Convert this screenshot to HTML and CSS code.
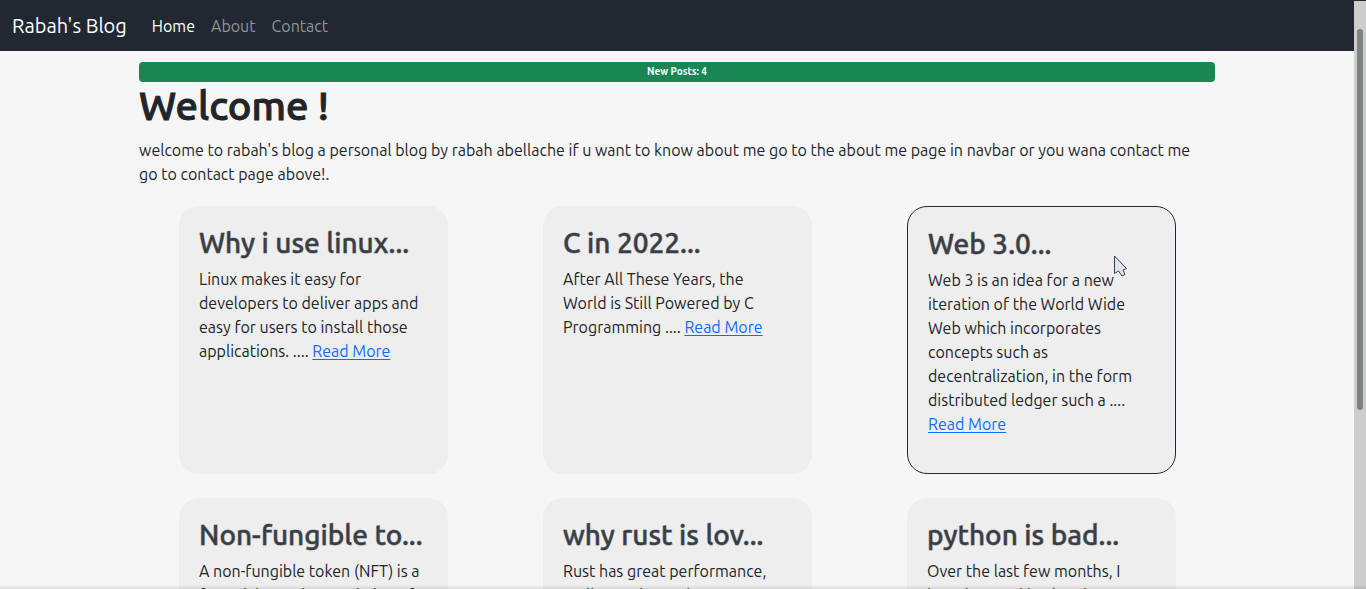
FILE: index.html
```html
<!DOCTYPE html>
<html lang="en">
<head>
<meta charset="utf-8">
<title>Rabah's Blog</title>
<link rel="stylesheet" href="styles.css">
</head>
<body>
<div class="page">
  <header class="navbar">
    <a class="brand" href="#">Rabah's Blog</a>
    <nav class="links">
      <a class="link active" href="#">Home</a>
      <a class="link" href="#">About</a>
      <a class="link" href="#">Contact</a>
    </nav>
  </header>
  <main class="container">
    <div class="badge">New Posts: 4</div>
    <h1 class="heading">Welcome !</h1>
    <p class="intro">welcome to rabah's blog a personal blog by rabah abellache if u want to know about me go to the about me page in navbar or you wana contact me go to contact page above!.</p>
    <section class="posts">
      <article class="post">
        <h2 class="title">Why i use linux...</h2>
        <p class="text">Linux makes it easy for<br>developers to deliver apps and<br>easy for users to install those<br>applications. .... <a class="more" href="#">Read More</a></p>
      </article>
      <article class="post">
        <h2 class="title">C in 2022...</h2>
        <p class="text">After All These Years, the<br>World is Still Powered by C<br>Programming .... <a class="more" href="#">Read More</a></p>
      </article>
      <article class="post selected">
        <h2 class="title">Web 3.0...</h2>
        <p class="text">Web 3 is an idea for a new<br>iteration of the World Wide<br>Web which incorporates<br>concepts such as<br>decentralization, in the form<br>distributed ledger such a ....<br><a class="more" href="#">Read More</a></p>
        <svg class="pointer" viewBox="0 0 14 22" aria-hidden="true"><path d="M1.500 1v17.500l4-2.500 3.500 5 3-1.500-2-4.500 3.500-1.500z"/></svg>
      </article>
      <article class="post">
        <h2 class="title">Non-fungible to...</h2>
        <p class="text">A non-fungible token (NFT) is a<br>financial security consisting of</p>
      </article>
      <article class="post">
        <h2 class="title">why rust is lov...</h2>
        <p class="text">Rust has great performance,<br>really good speed,</p>
      </article>
      <article class="post">
        <h2 class="title">python is bad...</h2>
        <p class="text">Over the last few months, I<br>heard several backend</p>
      </article>
    </section>
  </main>
</div>
<div class="scrollbar"><div class="thumb"></div></div>
</body>
</html>
```
FILE: styles.css
```css
* { box-sizing: border-box; }
body {
  margin: 0;
  height: 100vh;
  overflow: hidden;
  display: grid;
  grid-template-columns: 1fr 12px;
  border-top: 1px solid #2c2627;
  background: #f6f6f6;
  color: #212529;
  font: 16px/24px Ubuntu, "Noto Sans", sans-serif;
}
body::after {
  content: "";
  position: fixed;
  inset: auto 0 0;
  height: 4px;
  background: linear-gradient(transparent, rgba(0, 0, 0, 0.1));
}
.page { overflow: hidden; }
.navbar {
  display: flex;
  align-items: center;
  gap: 25px;
  height: 50px;
  padding: 0 12px;
  background: #222831;
}
.brand { color: #fff; font-size: 20px; text-decoration: none; }
.links { display: flex; gap: 16px; }
.link { color: #919498; text-decoration: none; }
.link.active { color: #fff; }
.container { max-width: 1100px; margin: 0 auto; padding: 11px 12px 0; }
.badge {
  height: 20px;
  border-radius: 4px;
  background: #198754;
  color: #fff;
  font-size: 10px;
  line-height: 20px;
  font-weight: 700;
  text-align: center;
}
.heading { margin: 0 0 8px; font-size: 40px; line-height: 48px; font-weight: 500; -webkit-text-stroke: 1px; }
.intro { margin: 0 0 20px; padding-right: 8px; }
.posts {
  display: grid;
  grid-template-columns: repeat(3, 269px);
  justify-content: space-between;
  gap: 24px 0;
  padding: 0 39px 0 40px;
}
.post {
  position: relative;
  min-height: 268px;
  padding: 20px;
  border-radius: 20px;
  background: #eee;
}
.selected { border: 1px solid #222831; }
.title {
  margin: 0 0 7px;
  color: #393e46;
  font-size: 28px;
  line-height: 34px;
  font-weight: 500;
  white-space: nowrap;
  -webkit-text-stroke: 1px rgba(57, 62, 70, 0.5);
}
.text { margin: 0; white-space: nowrap; }
.more { color: #0d6efd; text-underline-offset: 2px; }
.pointer {
  position: absolute;
  top: 48px;
  right: 48px;
  width: 14px;
  height: 22px;
  fill: #dfe3ee;
  stroke: #3b3f4a;
}
.scrollbar { padding: 28px 3px 0; background: #cdcdcd; }
.thumb { height: 68%; border-radius: 3px; background: #7e8281; }
```
